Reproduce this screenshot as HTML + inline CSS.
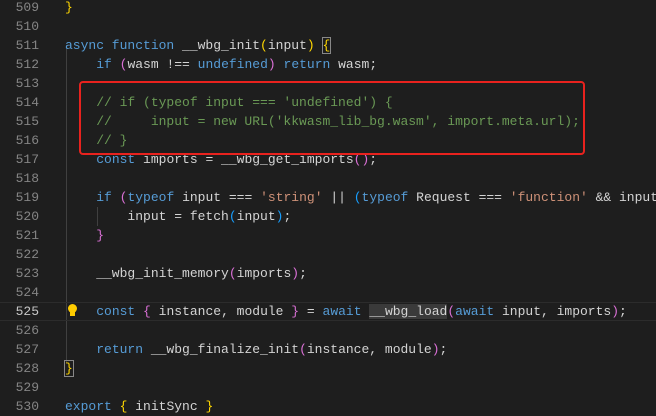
<!DOCTYPE html>
<html><head><style>
body{margin:0;background:#1e1e1e;width:656px;height:411px;overflow:hidden;position:relative;font-family:"Liberation Mono",monospace;font-size:13px;}
.l{position:absolute;left:0;height:19px;line-height:19px;white-space:pre;color:#d4d4d4;width:656px}
.n{position:absolute;left:0;width:39px;text-align:right;color:#858585}
.c{position:absolute;left:65px}
.k{color:#569cd6}.s{color:#ce9178}.m{color:#6a9955}.y{color:#ffd700}.p{color:#da70d6}.b{color:#179fff}
.guide{position:absolute;width:1px;background:#404040}
</style></head><body>
<div class="guide" style="left:66px;top:45px;height:318px"></div>
<div class="guide" style="left:97px;top:207px;height:19px"></div>
<div class="l" style="top:-2px"><span class="n">509</span><span class="c"><span class="y">}</span></span></div>
<div class="l" style="top:17px"><span class="n">510</span></div>
<div class="l" style="top:36px"><span class="n">511</span><span class="c"><span class="k">async function</span> __wbg_init<span class="y">(</span>input<span class="y">)</span> <span class="y" style="outline:1px solid #888">{</span></span></div>
<div class="l" style="top:55px"><span class="n">512</span><span class="c">    <span class="k">if</span> <span class="p">(</span>wasm !== <span class="k">undefined</span><span class="p">)</span> <span class="k">return</span> wasm;</span></div>
<div class="l" style="top:74px"><span class="n">513</span></div>
<div class="l" style="top:93px"><span class="n">514</span><span class="c m">    // if (typeof input === 'undefined') {</span></div>
<div class="l" style="top:112px"><span class="n">515</span><span class="c m">    //     input = new URL('kkwasm_lib_bg.wasm', import.meta.url);</span></div>
<div class="l" style="top:131px"><span class="n">516</span><span class="c m">    // }</span></div>
<div class="l" style="top:150px"><span class="n">517</span><span class="c">    <span class="k">const</span> imports = __wbg_get_imports<span class="p">()</span>;</span></div>
<div class="l" style="top:169px"><span class="n">518</span></div>
<div class="l" style="top:188px"><span class="n">519</span><span class="c">    <span class="k">if</span> <span class="p">(</span><span class="k">typeof</span> input === <span class="s">'string'</span> || <span class="b">(</span><span class="k">typeof</span> Request === <span class="s">'function'</span> &amp;&amp; input</span></div>
<div class="l" style="top:207px"><span class="n">520</span><span class="c">        input = fetch<span class="b">(</span>input<span class="b">)</span>;</span></div>
<div class="l" style="top:226px"><span class="n">521</span><span class="c">    <span class="p">}</span></span></div>
<div class="l" style="top:245px"><span class="n">522</span></div>
<div class="l" style="top:264px"><span class="n">523</span><span class="c">    __wbg_init_memory<span class="p">(</span>imports<span class="p">)</span>;</span></div>
<div class="l" style="top:283px"><span class="n">524</span></div>
<div class="l" style="top:302px;border-top:1px solid #2c2c2c;border-bottom:1px solid #2c2c2c;height:17px;line-height:17px"><span class="n" style="color:#c6c6c6">525</span><span class="c">    <span class="k">const</span> <span class="p">{</span> instance, module <span class="p">}</span> = <span class="k">await</span> <span style="background:#3a3a3a">__wbg_load</span><span class="p">(</span><span class="k">await</span> input, imports<span class="p">)</span>;</span></div>
<div style="position:absolute;left:68px;top:304px;width:9px;height:9px;border-radius:50%;background:#ffcc00"></div>
<div style="position:absolute;left:70px;top:312px;width:5px;height:4px;background:#ffcc00"></div>
<div class="l" style="top:321px"><span class="n">526</span></div>
<div class="l" style="top:340px"><span class="n">527</span><span class="c">    <span class="k">return</span> __wbg_finalize_init<span class="p">(</span>instance, module<span class="p">)</span>;</span></div>
<div class="l" style="top:359px"><span class="n">528</span><span class="c"><span class="y" style="outline:1px solid #888">}</span></span></div>
<div class="l" style="top:378px"><span class="n">529</span></div>
<div class="l" style="top:397px"><span class="n">530</span><span class="c"><span class="k">export</span> <span class="y">{</span> initSync <span class="y">}</span></span></div>
<div style="position:absolute;left:79px;top:81px;width:502px;height:70px;border:2px solid #e8221e;border-radius:4px"></div>
</body></html>
